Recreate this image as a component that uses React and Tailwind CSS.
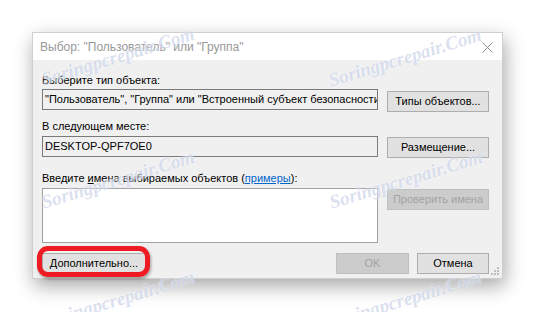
const marks = [
  { left: 'left-[118px]', top: 'top-[57px]' },
  { left: 'left-[405px]', top: 'top-[58px]' },
  { left: 'left-[118px]', top: 'top-[180px]' },
  { left: 'left-[406px]', top: 'top-[180px]' },
  { left: 'left-[118px]', top: 'top-[300px]' },
  { left: 'left-[405px]', top: 'top-[300px]' },
];

const Button = ({ children, disabled, className = '' }) => (
  <div
    className={`flex h-[21px] items-center justify-center border text-[11px] leading-none ${
      disabled
        ? 'border-[#bfbfbf] bg-[#cccccc] text-[#a3a3a3]'
        : 'border-[#adadad] bg-[#e1e1e1] text-black'
    } ${className}`}
  >
    {children}
  </div>
);

const App = () => {
  return (
    <div className="relative h-[312px] w-[536px] overflow-hidden bg-white pl-8 pt-8 font-['Liberation_Sans',sans-serif]">
      <div className="relative flex h-[247px] w-[471px] flex-col border border-[#cfcfcf] shadow-[2px_7px_18px_rgba(0,0,0,0.35)]">
        {/* title bar */}
        <div className="flex h-[27px] items-center justify-between bg-white pl-[7px] pr-[9px] text-[12px] text-[#999999]">
          <span>Выбор: "Пользователь" или "Группа"</span>
          <svg width="11" height="11" viewBox="0 0 11 11" className="mt-[2px]">
            <path d="M0.5 0.5 L10.5 10.5 M10.5 0.5 L0.5 10.5" stroke="#8a8a8a" strokeWidth="1" />
          </svg>
        </div>

        {/* body */}
        <div className="flex flex-1 flex-col bg-[#f0f0f0] pl-[9px] pr-[13px] pt-3 text-[11px] leading-4 text-black">
          <div>Выберите тип объекта:</div>
          <div className="mt-px flex items-start gap-[9px]">
            <div className="h-[21px] w-[336px] overflow-hidden whitespace-nowrap border border-[#7a7a7a] bg-[#f0f0f0] pl-[2px] leading-[19px]">
              "Пользователь", "Группа" или "Встроенный субъект безопасности"
            </div>
            <Button className="mt-[2px] w-[102px]">Типы объектов...</Button>
          </div>

          <div className="mt-[6px]">В следующем месте:</div>
          <div className="mt-[2px] flex items-start gap-[9px]">
            <div className="h-[21px] w-[336px] overflow-hidden whitespace-nowrap border border-[#7a7a7a] bg-[#f0f0f0] pl-[2px] leading-[19px]">
              DESKTOP-QPF7OE0
            </div>
            <Button className="mt-px w-[102px]">Размещение...</Button>
          </div>

          <div className="mt-3">
            Введите <span className="underline">и</span>мена выбираемых объектов (
            <span className="text-[#0066cc] underline">примеры</span>):
          </div>
          <div className="mt-[2px] flex items-start gap-[9px]">
            <div className="h-[55px] w-[336px] border border-[#a0a0a0] bg-white" />
            <Button disabled className="mt-px w-[102px]">
              Проверить имена
            </Button>
          </div>

          <div className="mt-[10px] flex items-start justify-between">
            <div className="relative">
              <Button className="w-[104px]">Дополнительно...</Button>
              <div className="pointer-events-none absolute -bottom-[3px] -left-[5px] -right-[4px] -top-[7px] rounded-[11px] border-[5px] border-[#ee1b22] shadow-[1px_2px_3px_rgba(0,0,0,0.35)]" />
            </div>
            <div className="flex gap-2">
              <Button disabled className="w-[73px]">
                OK
              </Button>
              <Button className="w-[72px]">Отмена</Button>
            </div>
          </div>
        </div>

        {/* size grip */}
        <svg width="10" height="10" viewBox="0 0 10 10" className="absolute bottom-[2px] right-[2px]">
          <rect x="7" y="1" width="2" height="2" fill="#bdbdbd" />
          <rect x="4" y="4" width="2" height="2" fill="#bdbdbd" />
          <rect x="7" y="4" width="2" height="2" fill="#bdbdbd" />
          <rect x="1" y="7" width="2" height="2" fill="#bdbdbd" />
          <rect x="4" y="7" width="2" height="2" fill="#bdbdbd" />
          <rect x="7" y="7" width="2" height="2" fill="#bdbdbd" />
        </svg>
      </div>

      {/* watermark */}
      {marks.map((m, i) => (
        <span
          key={i}
          className={`pointer-events-none absolute ${m.left} ${m.top} -translate-x-1/2 -translate-y-1/2 -rotate-[17deg] whitespace-nowrap font-['Liberation_Serif',serif] text-[19px] font-bold italic text-[#9fb0d6]/40 [text-shadow:0_0_2px_rgba(255,255,255,0.9)]`}
        >
          Soringpcrepair.Com
        </span>
      ))}
    </div>
  );
};

export default App;
